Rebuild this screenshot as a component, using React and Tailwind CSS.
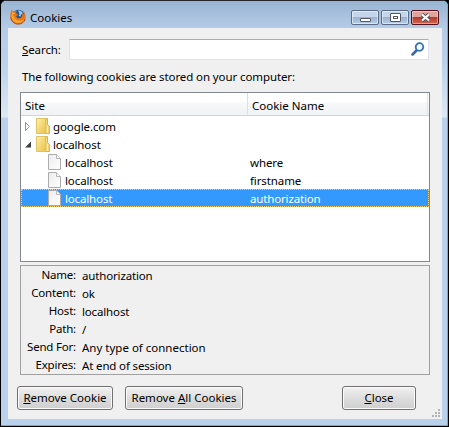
import React from "react";

const Folder = () => (
  <svg className="h-4 w-[15px] shrink-0" viewBox="0 0 15 16">
    <defs>
      <linearGradient id="folder" x1="0" y1="0" x2="1" y2="1">
        <stop offset="0" stopColor="#fff0a8" />
        <stop offset="1" stopColor="#e9c24c" />
      </linearGradient>
    </defs>
    <path d="M9 .5h2.500v6l2 2v7H9z" fill="#efd573" stroke="#cfad4b" strokeWidth=".9" />
    <path d="M.5.5h9v15h-9z" fill="url(#folder)" stroke="#dcbf5c" strokeWidth=".9" />
    <path d="M11.500 8v7" stroke="#fff3b8" strokeWidth=".8" />
  </svg>
);

const Page = () => (
  <svg className="h-4 w-[13px] shrink-0" viewBox="0 0 13 16">
    <defs>
      <linearGradient id="page" x1="0" y1="0" x2="1" y2="1">
        <stop offset="0" stopColor="#ececec" />
        <stop offset="1" stopColor="#ffffff" />
      </linearGradient>
    </defs>
    <path d="M.5.5h8l4 4v11H.5z" fill="url(#page)" stroke="#ababab" />
    <path d="M8.5.5v4h4" fill="#fff" stroke="#b5b5b5" />
  </svg>
);

const Firefox = () => (
  <svg className="h-4 w-4 shrink-0" viewBox="0 0 16 16">
    <circle cx="8.500" cy="7" r="6.200" fill="#27568f" />
    <path d="M8 1.500c2.500-.3 4.500 1 4.800 3.500l-1.800.5-.5 2-2-.5 1-2z" fill="#8ccbed" />
    <path d="M1.400.8 3.600 2.600 6.800 2.200 5.800 4.300l2.600 1.300-2.200 1.300C6 8.800 8.500 10 10.500 9c2-1 2.200-3.500 1.500-5.500 1.400.8 2 1.800 2.200 2.800L14 2.500c2.200 3 2.300 7.300-.4 10.300-3 3.300-8.200 3.300-11.200.2C-.3 10.200-.2 5 1.400.8z" fill="#e4741c" />
    <path d="M1.600 5c-.8 4.500 1.700 8.700 6.200 9 3.200.2 5.800-1.600 6.500-4.600-2 2.300-5.200 2.700-7.500 1.500C4.300 9.800 4.500 7.500 3.500 6.500z" fill="#f7a52a" />
    <path d="M.8 8.500c.5 3.800 3.600 6.600 7.400 6.600 3.400 0 6-1.800 7-5" fill="none" stroke="#b5461b" strokeWidth="1" />
    <path d="M1.800 2.500 3.500 4 5 3.600 4.200 5.500 2.200 5z" fill="#f8b64a" />
  </svg>
);

function ChromeButton({ danger, children }) {
  return (
    <div
      className={
        danger
          ? "flex h-[15px] w-7 items-center justify-center rounded-[2px] border border-[#56121c] bg-linear-to-b from-[#e0a49d] from-45% via-[#b83a2e] via-50% to-[#d0664f] shadow-[inset_0_0_0_1px_#ffffff66]"
          : "flex h-[15px] w-7 items-center justify-center rounded-[2px] border border-[#596b87] bg-linear-to-b from-[#c5d6ea] from-45% via-[#9cb4d1] via-50% to-[#b6cce6] shadow-[inset_0_0_0_1px_#ffffff80]"
      }
    >
      {children}
    </div>
  );
}

function Row({ children, name, selected }) {
  return (
    <div
      className={
        selected
          ? "flex h-[18px] items-center bg-[#3399ff] tracking-[-0.15px] text-white outline-1 -outline-offset-1 outline-dotted outline-[#f0ce70]"
          : "flex h-[18px] items-center tracking-[-0.1px]"
      }
    >
      <div className="flex w-[229px] items-center">{children}</div>
      <div className="pt-[2px]">{name}</div>
    </div>
  );
}

const Child = () => (
  <div className="flex items-center gap-1 pl-[27px]">
    <Page />
    <span className="pt-[2px]">localhost</span>
  </div>
);

const details = [
  ["Name:", "authorization"],
  ["Content:", "ok"],
  ["Host:", "localhost"],
  ["Path:", "/"],
  ["Send For:", "Any type of connection"],
  ["Expires:", "At end of session"],
];

const button =
  "flex h-6 items-center justify-center rounded-[3px] border border-[#707070] bg-linear-to-b from-[#f2f2f2] from-0% via-[#dddddd] via-50% to-[#cfcfcf] shadow-[inset_0_0_0_1px_#fbfbfb]";

export default function App() {
  return (
    <div className="h-[427px] w-[449px] bg-black font-['Noto_Sans',sans-serif] text-[11.5px] leading-[18px] whitespace-nowrap text-black">
      <div className="flex h-full flex-col rounded-t-[6px] border border-black border-t-[#25272f] bg-[#b9d1ea]">
        <div className="flex min-h-0 flex-1 flex-col rounded-t-[5px] border-r border-b border-r-[#38c5e0] border-b-[#38c5e0] bg-[linear-gradient(#99b4d1_0px,#b5cce7_27px,#b9d1ea_60px,#dce8f5_116px,#b9d1ea_117px)] pr-[5px] pb-[6px] pl-[7px]">
          <header className="flex h-[27px] shrink-0 items-start pt-[8px] pl-[2px]">
            <Firefox />
            <span className="ml-1">Cookies</span>
            <div className="mt-px ml-auto flex gap-[2px] pr-[3px]">
              <ChromeButton>
                <i className="mt-1 h-1 w-[11px] rounded-[1px] border border-[#535666] bg-white" />
              </ChromeButton>
              <ChromeButton>
                <i className="flex h-[9px] w-[11px] items-center justify-center rounded-[1px] border border-[#535666] bg-white">
                  <b className="h-[3px] w-[5px] border border-[#535666]" />
                </i>
              </ChromeButton>
              <ChromeButton danger>
                <svg className="h-[9px] w-[11px]" viewBox="0 0 11 9">
                  <path d="M2 1.500 9 7.500M9 1.500 2 7.500" stroke="#5d4650" strokeWidth="4" />
                  <path d="M2 1.500 9 7.500M9 1.500 2 7.500" stroke="#fff" strokeWidth="2.300" />
                </svg>
              </ChromeButton>
            </div>
          </header>
          <main className="flex min-h-0 flex-1 flex-col bg-[#f0f0f0] pt-[11px] pr-[12px] pl-[12px]">
            <div className="flex h-[21px] items-center pl-[2px]">
              <label className="w-[47px] pt-px tracking-[-0.1px]"><u>S</u>earch:</label>
              <div className="flex h-[21px] w-[360px] items-center justify-end rounded-[1px] border border-[#e2e3ea] border-t-[#abadb3] bg-white pr-[3px] pb-[2px]">
                <svg className="h-[14px] w-[14px]" viewBox="0 0 14 14">
                  <path d="M1.500 12.500 6 8" stroke="#2e69a8" strokeWidth="2.500" strokeLinecap="round" />
                  <circle cx="8.500" cy="5" r="3.800" fill="#f5faff" stroke="#3373b4" strokeWidth="1.800" />
                </svg>
              </div>
            </div>
            <p className="mt-[8px] mb-[6px] pl-[2px] tracking-[-0.1px]">The following cookies are stored on your computer:</p>
            <section className="h-[170px] shrink-0 border border-[#828790] bg-white">
              <div className="mb-px flex h-[23px] border-b border-[#d5d5d5] bg-linear-to-b from-white from-40% via-[#f7f8fa] via-45% to-[#f1f2f4]">
                <div className="w-[227px] border-r border-[#dedfe1] pt-[4px] pl-1">Site</div>
                <div className="mr-px flex-1 border-r border-[#e2e3e5] pt-[4px] pl-[4px]">Cookie Name</div>
              </div>
              <Row>
                <svg className="ml-1 h-[9px] w-[11px]" viewBox="0 0 11 9">
                  <path d="M.5.5 4.500 4.500.5 8.500z" fill="#fff" stroke="#949494" />
                </svg>
                <Folder /><span className="ml-[2px] pt-px">google.com</span>
              </Row>
              <Row>
                <svg className="ml-1 h-[7px] w-[11px]" viewBox="0 0 11 7">
                  <path d="M6 .5v6H0z" fill="#404040" />
                </svg>
                <Folder /><span className="ml-[2px] pt-px">localhost</span>
              </Row>
              <Row name="where"><Child /></Row>
              <Row name="firstname"><Child /></Row>
              <Row name="authorization" selected><Child /></Row>
            </section>
            <section className="mt-[3px] h-[110px] shrink-0 border border-[#a0a0a0]">
              {details.map(([label, value]) => (
                <div key={label} className="flex h-[18px]">
                  <span className="w-[55px] text-right tracking-[-0.2px]">{label}</span>
                  <span className={value.startsWith("Any") ? "ml-[6px] pt-px" : "ml-[6px] pt-px tracking-[-0.15px]"}>{value}</span>
                </div>
              ))}
            </section>
            <footer className="relative mt-[11px] -ml-[3px] flex">
              <div className={button + " w-24"}><span><u>R</u>emove Cookie</span></div>
              <div className={button + " ml-3 w-[118px]"}><span>Remove <u>A</u>ll Cookies</span></div>
              <div className={button + " mr-[14px] ml-auto w-[74px]"}><span><u>C</u>lose</span></div>
              <svg className="absolute top-[23px] -right-[10px] h-2 w-2" viewBox="0 0 8 8" fill="#b5b5b5">
                <path d="M6 0h2v2H6zM3 3h2v2H3zM6 3h2v2H6zM0 6h2v2H0zM3 6h2v2H3zM6 6h2v2H6z" />
              </svg>
            </footer>
          </main>
        </div>
      </div>
    </div>
  );
}
